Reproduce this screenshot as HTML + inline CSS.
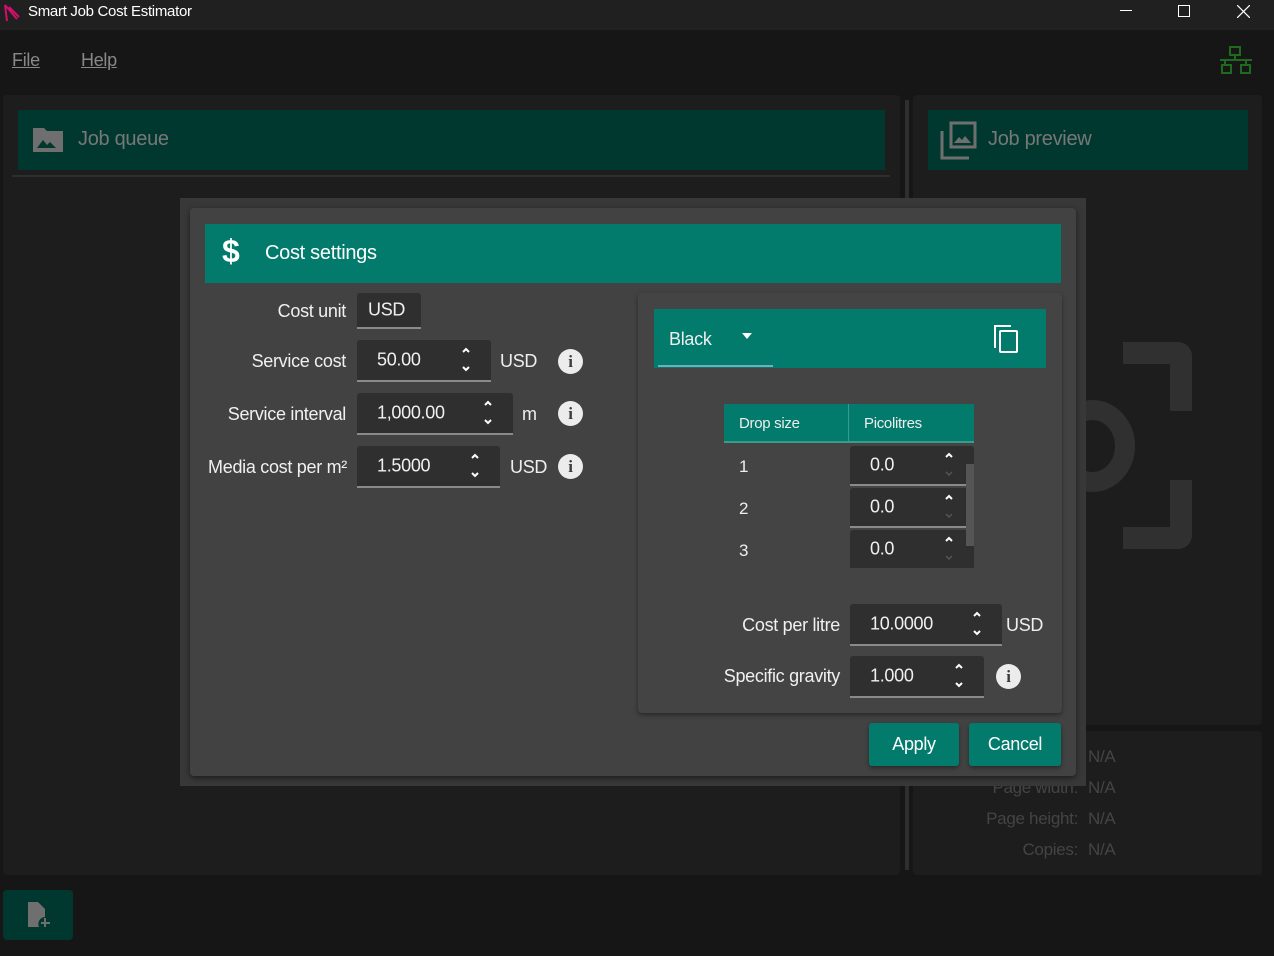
<!DOCTYPE html>
<html><head><meta charset="utf-8"><style>
*{box-sizing:border-box;margin:0;padding:0}
body{width:1274px;height:956px;background:#161616;font-family:"Liberation Sans",sans-serif;color:#eee;position:relative;overflow:hidden;letter-spacing:-0.3px}
.a{position:absolute}
.lbl{position:absolute;font-size:18px;color:#f0f0f0;text-align:right}
.inp{position:absolute;background:#2f2f2f;border-bottom:2px solid #8a8a8a;border-radius:3px 3px 0 0;font-size:18px;color:#f0f0f0}
.inp span{position:absolute;left:20px;top:50%;transform:translateY(-50%)}
.sp{position:absolute;right:20px;top:7px;width:10px;height:26px}
.info{position:absolute;width:25px;height:25px;border-radius:50%;background:#ececec;color:#3b3b3b;font-weight:bold;font-size:17px;text-align:center;line-height:25px;font-family:"Liberation Serif",serif}
.btn{position:absolute;background:#027a6c;border-radius:3px;font-size:18px;color:#fff;text-align:center;line-height:43px;box-shadow:0 2px 4px rgba(0,0,0,.4)}
</style></head><body>
<svg width="0" height="0" style="position:absolute"><defs>
<symbol id="s" viewBox="0 0 10 26"><path d="M2 5l3-3 3 3" stroke="#fff" stroke-width="2" fill="none"/><path d="M2 20l3 3 3-3" stroke="#fff" stroke-width="2" fill="none"/></symbol>
<symbol id="s2" viewBox="0 0 10 26"><path d="M2 5l3-3 3 3" stroke="#fff" stroke-width="2" fill="none"/><path d="M2 20l3 3 3-3" stroke="#555" stroke-width="1.5" fill="none"/></symbol>
</defs></svg>
<div class="a" style="left:0;top:0;width:1274px;height:30px;background:#202020"></div>
<svg class="a" style="left:3px;top:3px" width="18" height="20"><path d="M2 2 L14 16 M2 2 L4 18 M6 4 L16 14" stroke="#d0106a" stroke-width="2" fill="none"/></svg>
<div class="a" style="left:28px;top:3px;font-size:15px;color:#fff">Smart Job Cost Estimator</div>
<div class="a" style="left:1120px;top:10px;width:12px;height:1px;background:#fff"></div>
<div class="a" style="left:1178px;top:5px;width:12px;height:12px;border:1px solid #fff"></div>
<svg class="a" style="left:1237px;top:5px" width="13" height="13"><path d="M0 0L13 13M13 0L0 13" stroke="#fff" stroke-width="1.2"/></svg>
<div class="a" style="left:12px;top:50px;font-size:18px;color:#888;text-decoration:underline">File</div>
<div class="a" style="left:81px;top:50px;font-size:18px;color:#888;text-decoration:underline">Help</div>
<svg class="a" style="left:1219px;top:45px" width="34" height="30" fill="none" stroke="#1e6a1e" stroke-width="2"><rect x="11" y="2" width="10" height="8"/><path d="M16 10v5M1 15h32M6 15v5M27 15v5"/><rect x="3" y="20" width="9" height="8"/><rect x="22" y="20" width="9" height="8"/></svg>
<div class="a" style="left:3px;top:95px;width:897px;height:780px;background:#1d1d1d;border-radius:4px"></div>
<div class="a" style="left:18px;top:110px;width:867px;height:60px;background:#00382f"></div>
<svg class="a" style="left:31px;top:126px" width="34" height="28"><path d="M2 2h11l3 3h16v21H2z" fill="#6f6f6f"/><path d="M6 22l6-8 4 5 3-3 6 6z" fill="#00382f"/></svg>
<div class="a" style="left:78px;top:128px;font-size:20px;color:#777">Job queue</div>
<div class="a" style="left:12px;top:175px;width:878px;height:2px;background:#2e2e2e"></div>
<div class="a" style="left:905px;top:100px;width:4px;height:770px;background:#2e2e2e"></div>
<div class="a" style="left:913px;top:95px;width:349px;height:630px;background:#1d1d1d;border-radius:4px"></div>
<div class="a" style="left:913px;top:731px;width:349px;height:144px;background:#1d1d1d;border-radius:4px"></div>
<div class="a" style="left:928px;top:110px;width:320px;height:60px;background:#00382f"></div>
<svg class="a" style="left:939px;top:121px" width="40" height="40" fill="none" stroke="#6f6f6f" stroke-width="3"><rect x="12" y="2" width="24" height="24"/><path d="M3 10v27h27"/><path d="M15 22l5-6 3 3 3-4 6 7z" fill="#6f6f6f" stroke="none"/></svg>
<div class="a" style="left:988px;top:128px;font-size:20px;color:#777">Job preview</div>
<div class="a" style="left:1123px;top:342px;width:69px;height:69px;border:22px solid #303030;border-left:none;border-bottom:none;border-radius:0 14px 0 0"></div>
<div class="a" style="left:1123px;top:480px;width:69px;height:69px;border:22px solid #303030;border-left:none;border-top:none;border-radius:0 0 14px 0"></div>
<div class="a" style="left:1050px;top:400px;width:85px;height:92px;border:20px solid #303030;border-radius:50%"></div>
<div class="a" style="left:1088px;top:741px;font-size:17px;color:#444;line-height:31px;width:40px">N/A<br>N/A<br>N/A<br>N/A</div>
<div class="a" style="left:940px;top:772px;font-size:17px;color:#444;line-height:31px;text-align:right;width:138px">Page width:<br>Page height:<br>Copies:</div>
<div class="a" style="left:3px;top:890px;width:70px;height:50px;background:#00382f;border-radius:4px"></div>
<svg class="a" style="left:27px;top:901px" width="26" height="28"><path d="M1 1h10l7 7v8a7 7 0 0 0-6 10H1z" fill="#6f6f6f"/><path d="M18 17v9M14 22h9" stroke="#6f6f6f" stroke-width="2"/></svg>
<div class="a" style="left:180px;top:198px;width:906px;height:588px;background:#383838"></div>
<div class="a" style="left:190px;top:208px;width:886px;height:568px;background:#424242;border-radius:4px;box-shadow:0 2px 6px rgba(0,0,0,.5)"></div>
<div class="a" style="left:205px;top:224px;width:856px;height:59px;background:#027a6c"></div>
<div class="a" style="left:222px;top:233px;font-size:32px;color:#fff;font-weight:bold">$</div>
<div class="a" style="left:265px;top:242px;font-size:20px;color:#fff">Cost settings</div>
<div class="lbl" style="left:200px;width:146px;top:301px">Cost unit</div>
<div class="inp" style="left:357px;top:293px;width:64px;height:36px"><span style="left:11px">USD</span></div>
<div class="lbl" style="left:200px;width:146px;top:351px">Service cost</div>
<div class="inp" style="left:357px;top:340px;width:134px;height:42px"><span>50.00</span><svg class="sp"><use href="#s"/></svg></div>
<div class="a" style="left:500px;top:351px;font-size:18px">USD</div><div class="info" style="left:558px;top:349px">i</div>
<div class="lbl" style="left:200px;width:146px;top:404px">Service interval</div>
<div class="inp" style="left:357px;top:393px;width:156px;height:42px"><span>1,000.00</span><svg class="sp"><use href="#s"/></svg></div>
<div class="a" style="left:522px;top:404px;font-size:18px">m</div><div class="info" style="left:558px;top:401px">i</div>
<div class="lbl" style="left:200px;width:147px;top:457px">Media cost per m²</div>
<div class="inp" style="left:357px;top:446px;width:143px;height:42px"><span>1.5000</span><svg class="sp"><use href="#s"/></svg></div>
<div class="a" style="left:510px;top:457px;font-size:18px">USD</div><div class="info" style="left:558px;top:454px">i</div>
<div class="a" style="left:638px;top:293px;width:424px;height:420px;background:#444;border-radius:4px;box-shadow:0 2px 5px rgba(0,0,0,.4)"></div>
<div class="a" style="left:654px;top:309px;width:392px;height:59px;background:#027a6c"></div>
<div class="a" style="left:669px;top:329px;font-size:18px">Black</div>
<svg class="a" style="left:742px;top:333px" width="10" height="6"><path d="M0 0h10L5 6z" fill="#fff"/></svg>
<div class="a" style="left:658px;top:365px;width:115px;height:2px;background:#7ab"></div>
<svg class="a" style="left:992px;top:324px" width="28" height="30" fill="none" stroke="#fff" stroke-width="2"><path d="M3 24V2h16"/><rect x="8" y="7" width="17" height="21" rx="1"/></svg>
<div class="a" style="left:724px;top:404px;width:250px;height:39px;background:#027a6c;border-bottom:2px solid #3a9a8c"></div>
<div class="a" style="left:848px;top:404px;width:1px;height:39px;background:#3a9a8c"></div>
<div class="a" style="left:739px;top:415px;font-size:15px">Drop size</div>
<div class="a" style="left:864px;top:415px;font-size:15px">Picolitres</div>
<div class="a" style="left:739px;top:457px;font-size:17px">1</div>
<div class="a" style="left:739px;top:499px;font-size:17px">2</div>
<div class="a" style="left:739px;top:541px;font-size:17px">3</div>
<div class="inp" style="left:850px;top:446px;width:124px;height:40px"><span>0.0</span><svg class="sp" style="top:6px"><use href="#s2"/></svg></div>
<div class="inp" style="left:850px;top:488px;width:124px;height:40px"><span>0.0</span><svg class="sp" style="top:6px"><use href="#s2"/></svg></div>
<div class="inp" style="left:850px;top:530px;width:124px;height:38px;border-bottom:none"><span>0.0</span><svg class="sp" style="top:6px"><use href="#s2"/></svg></div>
<div class="a" style="left:966px;top:464px;width:8px;height:82px;background:#555"></div>
<div class="lbl" style="left:700px;width:140px;top:615px">Cost per litre</div>
<div class="inp" style="left:850px;top:604px;width:152px;height:42px"><span>10.0000</span><svg class="sp"><use href="#s"/></svg></div>
<div class="a" style="left:1006px;top:615px;font-size:18px">USD</div>
<div class="lbl" style="left:700px;width:140px;top:666px">Specific gravity</div>
<div class="inp" style="left:850px;top:656px;width:134px;height:42px"><span>1.000</span><svg class="sp"><use href="#s"/></svg></div>
<div class="info" style="left:996px;top:664px">i</div>
<div class="btn" style="left:869px;top:723px;width:90px;height:43px">Apply</div>
<div class="btn" style="left:969px;top:723px;width:92px;height:43px">Cancel</div>
</body></html>
